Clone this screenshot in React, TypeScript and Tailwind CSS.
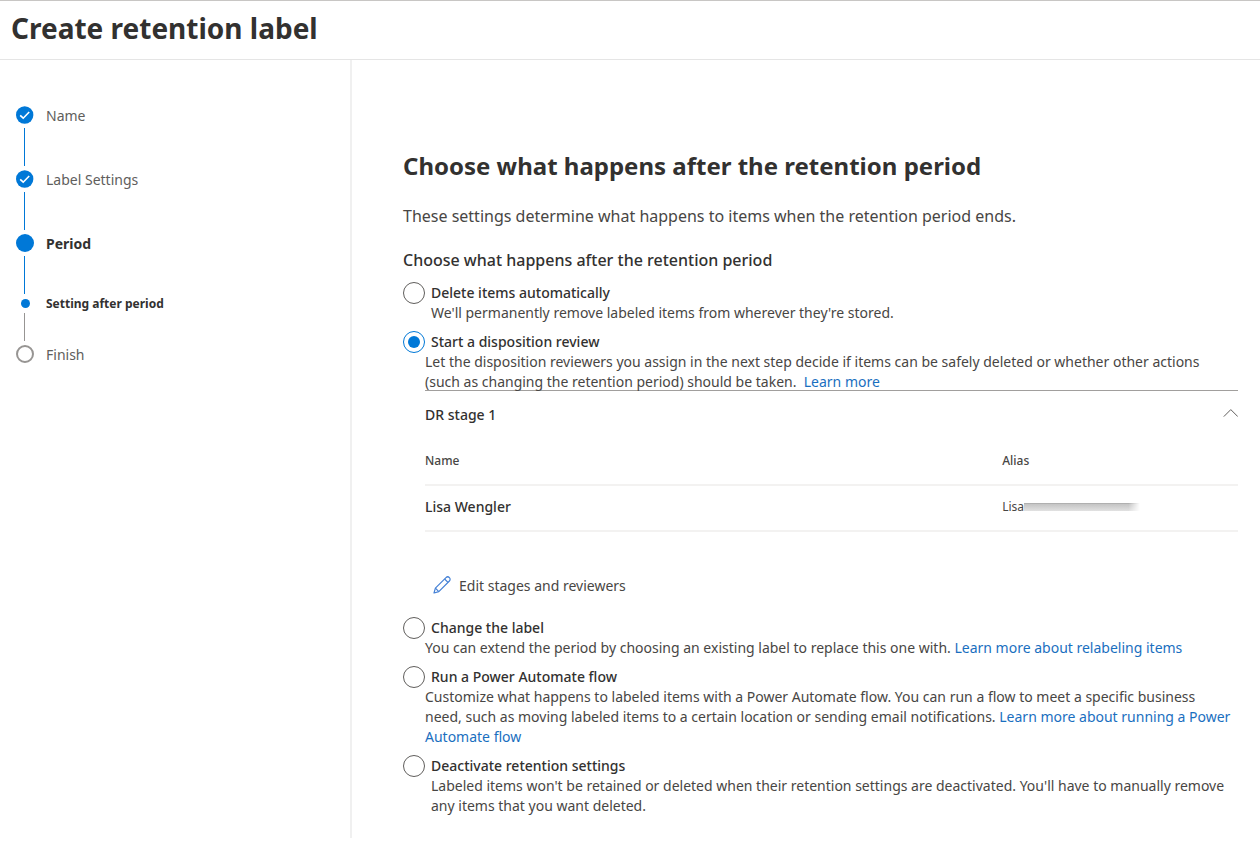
import { useState } from 'react';
import type { ReactNode } from 'react';

type StepState = 'done' | 'current' | 'sub' | 'todo';

const steps: { label: string; state: StepState }[] = [
    { label: 'Name', state: 'done' },
    { label: 'Label Settings', state: 'done' },
    { label: 'Period', state: 'current' },
    { label: 'Setting after period', state: 'sub' },
    { label: 'Finish', state: 'todo' },
];

const reviewers = [{ name: 'Lisa Wengler', alias: 'Lisa' }];

function StepMarker({ state }: { state: StepState }) {
    if (state === 'done') {
        return (
            <svg viewBox="0 0 18 18" className="size-[18px]" fill="none" aria-hidden="true">
                <circle cx="8.7" cy="9" r="8.7" fill="#0078d7" />
                <path d="M4.2 9.4l3 2.8 6-6.2" stroke="#fff" strokeWidth="1.6" />
            </svg>
        );
    }
    if (state === 'current') return <span className="size-[18px] rounded-full bg-[#0078d7]" />;
    if (state === 'sub') return <span className="size-[9px] rounded-full bg-[#0078d7]" />;
    return <span className="size-[18px] rounded-full border-2 border-[#979593]" />;
}

function Steps() {
    return (
        <ol>
            {steps.map((step, i) => {
                const isSub = step.state === 'sub';
                return (
                    <li key={step.label}>
                        <div className={`flex items-center gap-3 ${isSub ? 'h-[11px]' : 'h-[18px]'}`}>
                            <span className="flex w-[18px] justify-center">
                                <StepMarker state={step.state} />
                            </span>
                            <span
                                className={
                                    isSub
                                        ? 'text-[12px] font-bold text-[#323130]'
                                        : step.state === 'current'
                                          ? 'text-[14px] font-bold text-[#323130]'
                                          : 'text-[14px] text-[#605e5c]'
                                }
                            >
                                {step.label}
                            </span>
                        </div>
                        {i < steps.length - 1 && (
                            <div
                                className={`my-1 ml-2 w-px ${isSub ? 'h-7 bg-[#979593]' : 'h-[38px] bg-[#0078d7]'}`}
                            />
                        )}
                    </li>
                );
            })}
        </ol>
    );
}

function LearnMore({ children }: { children: ReactNode }) {
    return (
        <a href="#" className="text-[#1a6fc0] hover:underline">
            {children}
        </a>
    );
}

interface OptionProps {
    id: string;
    title: string;
    selected: string;
    onSelect: (id: string) => void;
    indent?: boolean;
    description: ReactNode;
    children?: ReactNode;
}

function Option({ id, title, selected, onSelect, indent, description, children }: OptionProps) {
    return (
        <div>
            <div className="flex h-5 items-center gap-1.5">
                <input
                    type="radio"
                    id={id}
                    name="after-period"
                    checked={selected === id}
                    onChange={() => onSelect(id)}
                    className="grid size-[22px] shrink-0 appearance-none place-content-center rounded-full border border-[#605e5c] bg-white before:size-3 before:rounded-full checked:border-[#0078d7] checked:before:bg-[#0078d7]"
                />
                <label htmlFor={id} className="text-[14px] leading-5 font-medium text-[#323130]">
                    {title}
                </label>
            </div>
            <div className={indent ? 'pl-7' : 'pl-[22px]'}>
                <p className="pr-1 text-[14px] leading-5 text-[#484644]">{description}</p>
                {children}
            </div>
        </div>
    );
}

function ReviewStage() {
    const [isOpen, setIsOpen] = useState(true);

    return (
        <div className="-mt-0.5 border-t border-[#a19f9d]">
            <button
                type="button"
                aria-expanded={isOpen}
                onClick={() => setIsOpen(!isOpen)}
                className="flex h-[46px] w-full items-center justify-between text-[14px] font-medium text-[#323130]"
            >
                DR stage 1
                <svg
                    viewBox="0 0 16 16"
                    className={`size-4 ${isOpen ? '' : 'rotate-180'}`}
                    fill="none"
                    stroke="#605e5c"
                    aria-hidden="true"
                >
                    <path d="M1.8 10.6l7-7 7 7" />
                </svg>
            </button>
            {isOpen && (
                <table className="w-full table-fixed text-left text-[12px] text-[#484644]">
                    <thead>
                        <tr className="h-12 border-b-2 border-[#f3f2f1]">
                            <th className="w-[71%] font-medium">Name</th>
                            <th className="font-medium">Alias</th>
                        </tr>
                    </thead>
                    <tbody>
                        {reviewers.map((reviewer) => (
                            <tr key={reviewer.name} className="h-[46px] border-b-2 border-[#f3f2f1]">
                                <td className="pb-1 text-[14px] font-medium text-[#323130]">{reviewer.name}</td>
                                <td className="pb-0.5">
                                    <span className="flex items-center">
                                        {reviewer.alias}
                                        {/* rest of the address is redacted */}
                                        <span className="h-2 w-[116px] border-t border-[#b0b0b0] bg-linear-to-b from-[#c4c4c4] to-[#e2e2e2] mask-r-from-90%" />
                                    </span>
                                </td>
                            </tr>
                        ))}
                    </tbody>
                </table>
            )}
            <button type="button" className="mt-[33px] mb-1 flex h-10 items-center gap-2 px-2 text-[14px] text-[#484644]">
                <svg
                    viewBox="0 0 18 18"
                    className="size-[18px]"
                    fill="none"
                    stroke="#4581d6"
                    strokeWidth="1.2"
                    strokeLinejoin="round"
                    aria-hidden="true"
                >
                    <path d="M1 17l1.4-4.8L13 1.6a2.4 2.4 0 0 1 3.4 3.4L5.8 15.6z" />
                    <path d="M11.6 3l3.4 3.4M2.4 12.2l3.4 3.4" />
                </svg>
                Edit stages and reviewers
            </button>
        </div>
    );
}

export default function App() {
    const [selected, setSelected] = useState('review');
    const shared = { selected, onSelect: setSelected };

    return (
        <div className="min-h-screen border-t border-[#c8c6c4] bg-white pb-[13px] font-['Noto_Sans',sans-serif]">
            <header className="flex h-[59px] items-center border-b border-[#e5e5e5] px-[11px] pb-1">
                <h1 className="text-[28px] font-bold text-[#323130]">Create retention label</h1>
            </header>

            <div className="flex">
                <nav aria-label="Progress" className="w-[352px] shrink-0 border-r-2 border-[#f0f0f0] pt-[46px] pl-4">
                    <Steps />
                </nav>

                <main className="min-w-0 flex-1 pt-[88px] pr-[22px] pb-[22px] pl-[51px]">
                    <h2 className="text-[24px] leading-9 font-bold text-[#323130]">
                        Choose what happens after the retention period
                    </h2>
                    <p className="mt-5 text-[16px] leading-6 text-[#484644]">
                        These settings determine what happens to items when the retention period ends.
                    </p>

                    <fieldset className="mt-5">
                        <legend className="text-[16px] leading-6 font-medium text-[#323130]">
                            Choose what happens after the retention period
                        </legend>
                        <div className="mt-[11px] flex flex-col gap-[9px]">
                            <Option
                                {...shared}
                                id="delete"
                                title="Delete items automatically"
                                indent
                                description="We'll permanently remove labeled items from wherever they're stored."
                            />
                            <Option
                                {...shared}
                                id="review"
                                title="Start a disposition review"
                                description={
                                    <>
                                        Let the disposition reviewers you assign in the next step decide if items can be
                                        safely deleted or whether other actions (such as changing the retention period)
                                        should be taken.&nbsp; <LearnMore>Learn more</LearnMore>
                                    </>
                                }
                            >
                                <ReviewStage />
                            </Option>
                            <Option
                                {...shared}
                                id="relabel"
                                title="Change the label"
                                description={
                                    <>
                                        You can extend the period by choosing an existing label to replace this one
                                        with. <LearnMore>Learn more about relabeling items</LearnMore>
                                    </>
                                }
                            />
                            <Option
                                {...shared}
                                id="flow"
                                title="Run a Power Automate flow"
                                description={
                                    <>
                                        Customize what happens to labeled items with a Power Automate flow. You can run
                                        a flow to meet a specific business need, such as moving labeled items to a
                                        certain location or sending email notifications.{' '}
                                        <LearnMore>Learn more about running a Power Automate flow</LearnMore>
                                    </>
                                }
                            />
                            <Option
                                {...shared}
                                id="deactivate"
                                title="Deactivate retention settings"
                                indent
                                description="Labeled items won't be retained or deleted when their retention settings are deactivated. You'll have to manually remove any items that you want deleted."
                            />
                        </div>
                    </fieldset>
                </main>
            </div>
        </div>
    );
}
